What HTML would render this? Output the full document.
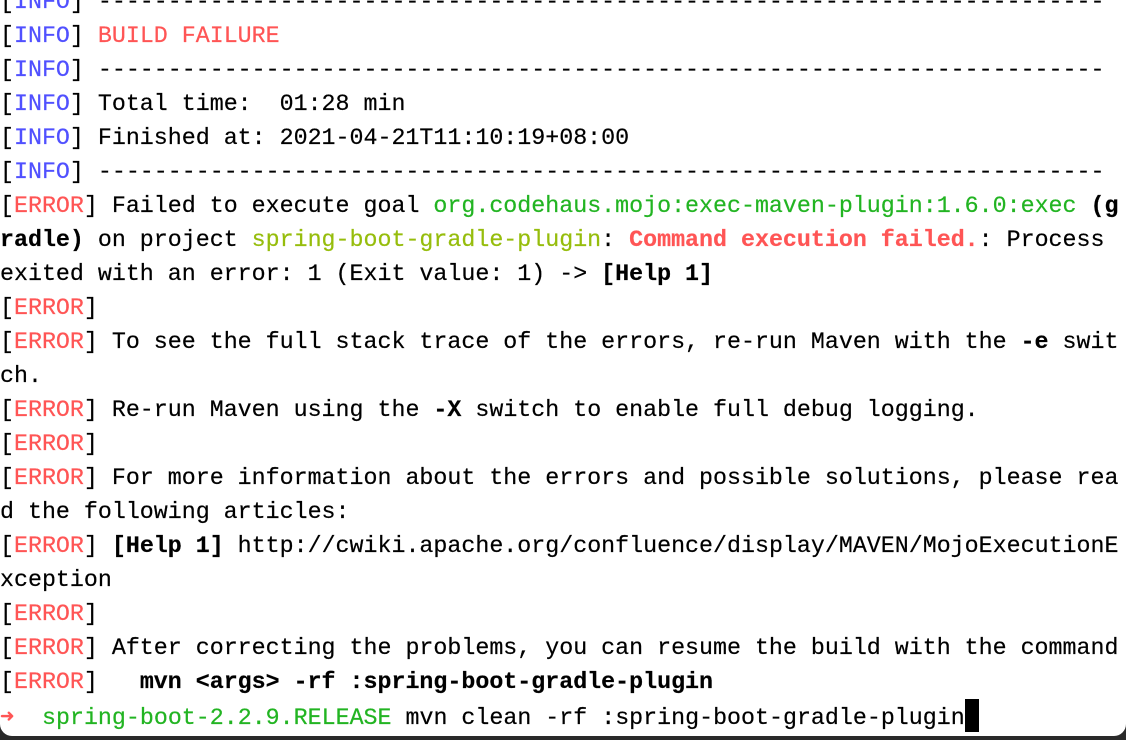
<!DOCTYPE html>
<html><head><meta charset="utf-8"><style>
html,body{margin:0;padding:0;width:1126px;height:740px;overflow:hidden;background:#2a2a2a;}
.panel{position:absolute;left:0;top:0;width:1126px;height:736px;background:#fff;border-radius:0 0 12px 12px;overflow:hidden;}
pre{position:absolute;left:0;top:-15px;margin:0;font-family:"Liberation Mono",monospace;font-size:23.3px;line-height:34px;color:#000;white-space:pre;-webkit-text-stroke:0.2px #000;}
.b{color:#5050ff;-webkit-text-stroke-color:#5050ff}.r{color:#ff5555;-webkit-text-stroke-color:#ff5555}.g{color:#22b422;-webkit-text-stroke-color:#22b422}.y{color:#96bd0c;-webkit-text-stroke-color:#96bd0c}.k{font-weight:bold}
.cur{display:inline-block;width:14px;height:33px;background:#000;vertical-align:-8px;}
</style></head><body><div class="panel"><pre>[<span class="b">INFO</span>] ------------------------------------------------------------------------
[<span class="b">INFO</span>] <span class="r">BUILD FAILURE</span>
[<span class="b">INFO</span>] ------------------------------------------------------------------------
[<span class="b">INFO</span>] Total time:  01:28 min
[<span class="b">INFO</span>] Finished at: 2021-04-21T11:10:19+08:00
[<span class="b">INFO</span>] ------------------------------------------------------------------------
[<span class="r">ERROR</span>] Failed to execute goal <span class="g">org.codehaus.mojo:exec-maven-plugin:1.6.0:exec</span> <span class="k">(g</span>
<span class="k">radle)</span> on project <span class="y">spring-boot-gradle-plugin</span>: <span class="r k">Command execution failed.</span>: Process
exited with an error: 1 (Exit value: 1) -&gt; <span class="k">[Help 1]</span>
[<span class="r">ERROR</span>]
[<span class="r">ERROR</span>] To see the full stack trace of the errors, re-run Maven with the <span class="k">-e</span> swit
ch.
[<span class="r">ERROR</span>] Re-run Maven using the <span class="k">-X</span> switch to enable full debug logging.
[<span class="r">ERROR</span>]
[<span class="r">ERROR</span>] For more information about the errors and possible solutions, please rea
d the following articles:
[<span class="r">ERROR</span>] <span class="k">[Help 1]</span> http://cwiki.apache.org/confluence/display/MAVEN/MojoExecutionE
xception
[<span class="r">ERROR</span>]
[<span class="r">ERROR</span>] After correcting the problems, you can resume the build with the command
[<span class="r">ERROR</span>]   <span class="k">mvn &lt;args&gt; -rf :spring-boot-gradle-plugin</span>
<span class="r">➜</span>  <span class="g">spring-boot-2.2.9.RELEASE</span> mvn clean -rf :spring-boot-gradle-plugin<span class="cur"></span></pre></div></body></html>
